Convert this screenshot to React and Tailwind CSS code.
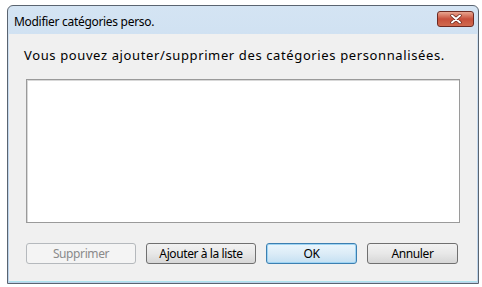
export default function App() {
  const font = { fontFamily: '"Noto Sans", "Liberation Sans", Arial, sans-serif' };
  return (
    <div className="w-[482px] h-[287px] bg-white pl-[7px] pt-[5px]" style={font}>
      <div className="w-[472px] h-[279px] flex flex-col rounded-t-[6px] border border-[#5a6470] bg-gradient-to-b from-[#d4e4f3] via-[#c3d8ee] to-[#bcd3ea]">
        <div className="h-[28px] flex items-center justify-between pl-[6px] pr-[4px]">
          <span className="text-[12px] text-black tracking-[-0.3px] mt-[4px]">Modifier catégories perso.</span>
          <div className="w-[37px] h-[16px] rounded-[3px] border border-[#6d2a22] bg-gradient-to-b from-[#e8a590] via-[#c7503c] to-[#d06a4e] flex items-center justify-center -mt-[2px]">
            <svg width="12" height="10" viewBox="0 0 12 10">
              <path d="M2 1.5 L10 8.5 M10 1.5 L2 8.5" stroke="#5a1a10" strokeWidth="3.2" strokeLinecap="round" />
              <path d="M2 1.5 L10 8.5 M10 1.5 L2 8.5" stroke="#ffffff" strokeWidth="2" strokeLinecap="round" />
            </svg>
          </div>
        </div>
        <div className="flex-1 mx-[1px] mb-[1px] bg-[#f0f0f0] flex flex-col px-[15px] pt-[13px] border-b border-[#aee4ee]">
          <div className="text-[13px] text-black leading-[16px] tracking-[0.62px] whitespace-nowrap">
            Vous pouvez ajouter/supprimer des catégories personnalisées.
          </div>
          <div className="mx-[2px] mt-[16px] h-[144px] bg-white border border-[#9a9a9a] shadow-[inset_1px_1px_0_#d8d8d8]"></div>
          <div className="mx-[2px] mt-[20px] flex gap-[10px]">
            <button className="w-[110px] h-[21px] rounded-[3px] border border-[#b5b9bd] bg-[#f4f4f4] text-[12px] text-[#8a8a8a] tracking-[-0.4px]">Supprimer</button>
            <button className="w-[110px] h-[21px] rounded-[3px] border border-[#707070] bg-gradient-to-b from-[#f2f2f2] via-[#e8e8e8] to-[#d6d6d6] text-[12px] text-black tracking-[-0.4px]">Ajouter à la liste</button>
            <button className="w-[91px] h-[21px] rounded-[3px] border border-[#3c7fb1] bg-gradient-to-b from-[#eaf6fd] via-[#dcecf7] to-[#c4e0f2] shadow-[inset_0_0_0_1px_#9fd4f3] text-[12px] text-black tracking-[-0.4px]">OK</button>
            <button className="w-[91px] h-[21px] rounded-[3px] border border-[#707070] bg-gradient-to-b from-[#f2f2f2] via-[#e8e8e8] to-[#d6d6d6] text-[12px] text-black tracking-[-0.4px]">Annuler</button>
          </div>
        </div>
      </div>
    </div>
  );
}
